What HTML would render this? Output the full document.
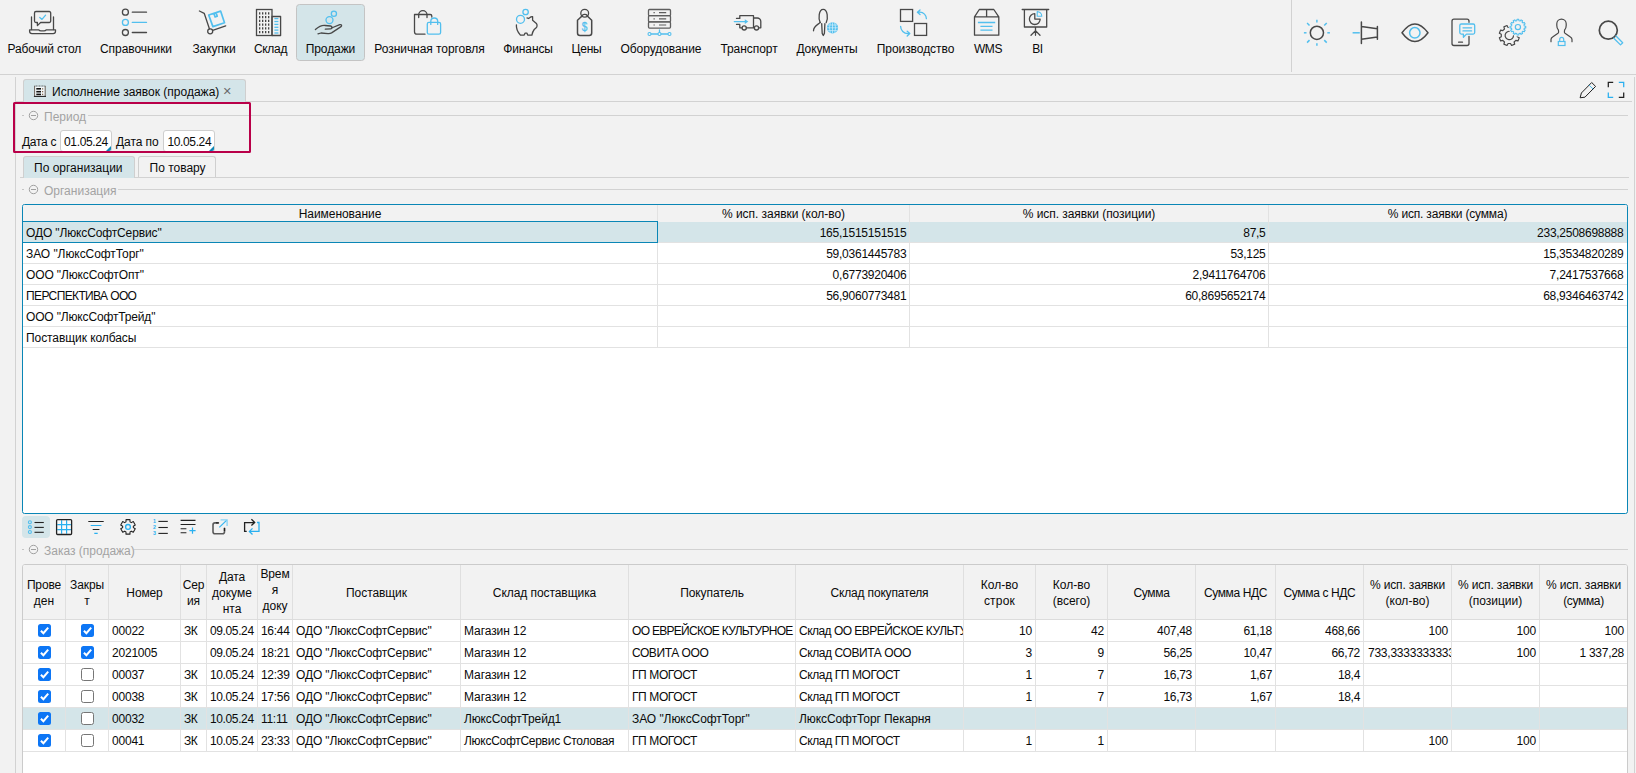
<!DOCTYPE html>
<html lang="ru"><head><meta charset="utf-8"><title>Исполнение заявок (продажа)</title>
<style>
*{box-sizing:border-box}
html,body{margin:0;padding:0}
body{width:1636px;height:773px;overflow:hidden;background:#f2f2f2;position:relative;
 font-family:"Liberation Sans",sans-serif;font-size:12px;line-height:16px;color:#0a0a0a}
.a{position:absolute}
.hl{position:absolute;height:1px;background:#d2d2d2}
.vl{position:absolute;width:1px;background:#d2d2d2}
.t{position:absolute;white-space:nowrap;line-height:16px}
.nl{position:absolute;top:41px;width:140px;margin-left:-70px;text-align:center;white-space:nowrap}
.g{color:#a3a3a3}
.num{letter-spacing:-0.28px}
svg{position:absolute;left:0;top:0;overflow:visible}
.d{fill:none;stroke:#484848;stroke-width:1.3;stroke-linecap:round;stroke-linejoin:round}
.b{fill:none;stroke:#52bfee;stroke-width:1.3;stroke-linecap:round;stroke-linejoin:round}
.sel{position:absolute;background:#d4e5e9;border:1px solid #c4c4c4;border-radius:3.5px}
.tab{position:absolute;border:1px solid #cfcfcf;border-bottom:none;border-radius:3px 3px 0 0}
.inp{position:absolute;background:#fff;border:1px solid #cecece;border-radius:3px;overflow:hidden}
.inp i{position:absolute;right:0;bottom:0;width:0;height:0;border-left:5px solid transparent;border-bottom:5px solid #0a86b6}
.tb1{position:absolute;left:22px;top:204px;width:1606px;height:310px;border:1px solid #0a86b6;border-radius:2.5px;background:#fff;overflow:hidden}
.tb2{position:absolute;left:22px;top:564px;width:1606px;height:230px;border:1px solid #cbcbcb;border-radius:3px;background:#fff;overflow:hidden}
.c{position:absolute;overflow:hidden;white-space:nowrap;line-height:16px}
.r{text-align:right}
.ctr{text-align:center}
.cb{position:absolute;width:13px;height:13px;border-radius:2.5px}
.cb.on{background:#0d76f5}
.cb.off{background:#fff;border:1px solid #767676}
</style></head>
<body>
<div class="sel" style="left:296px;top:4px;width:69px;height:57px"></div>
<div class="nl" style="left:44.4px"><span style="letter-spacing:-0.136px">Рабочий стол</span></div>
<div class="nl" style="left:136px"><span style="letter-spacing:-0.059px">Справочники</span></div>
<div class="nl" style="left:214px"><span style="letter-spacing:-0.078px">Закупки</span></div>
<div class="nl" style="left:270.5px"><span style="letter-spacing:-0.307px">Склад</span></div>
<div class="nl" style="left:330.5px"><span style="letter-spacing:-0.092px">Продажи</span></div>
<div class="nl" style="left:429.5px"><span style="letter-spacing:-0.052px">Розничная торговля</span></div>
<div class="nl" style="left:528px"><span style="letter-spacing:-0.098px">Финансы</span></div>
<div class="nl" style="left:586.5px"><span style="letter-spacing:-0.167px">Цены</span></div>
<div class="nl" style="left:661px"><span style="letter-spacing:-0.058px">Оборудование</span></div>
<div class="nl" style="left:749px"><span style="letter-spacing:-0.061px">Транспорт</span></div>
<div class="nl" style="left:827px"><span style="letter-spacing:-0.068px">Документы</span></div>
<div class="nl" style="left:915.5px"><span style="letter-spacing:-0.054px">Производство</span></div>
<div class="nl" style="left:988px"><span style="letter-spacing:-0.376px">WMS</span></div>
<div class="nl" style="left:1037.5px"><span style="letter-spacing:-0.426px">BI</span></div>
<div class="hl" style="left:0;top:74px;width:1636px"></div>
<div class="vl" style="left:1291px;top:0;height:72px"></div>
<svg width="1636" height="74" viewBox="0 0 1636 74">
<path class="d" d="M31.5 17V29.5M53.5 17V29.5"/><path class="d" d="M29.6 29.8H38.6q1 1.1 2.4 1.1h3q1.4 0 2.4-1.1H55.5V31.2q0 2.4-2.4 2.4H32q-2.4 0-2.4-2.4Z"/><path class="d" d="M36 11.5H49.2a1.5 1.5 0 0 1 1.5 1.5V21a1.5 1.5 0 0 1-1.5 1.5H40.6L37.4 25.6V22.5H36a1.5 1.5 0 0 1-1.5-1.5V13a1.5 1.5 0 0 1 1.5-1.5Z"/><path class="b" d="M39.8 17.4L42 19.4L45.6 15.2"/>
<circle class="d" cx="125.4" cy="12.2" r="3"/><path class="d" d="M132.3 12.2H146.5"/><circle class="b" cx="125.4" cy="22.4" r="3"/><path class="b" d="M132.3 22.4H146.5"/><circle class="d" cx="125.4" cy="32.5" r="3"/><path class="d" d="M132.3 32.5H146.5"/>
<path class="d" d="M199.4 11L204.2 13.3L209.4 28.8M212.7 30.4L225.7 25.8"/><circle class="d" cx="210.2" cy="31.3" r="2.5"/><path style="stroke-width:1.7" class="b" d="M208.7 15L220.6 11.1L224.5 22.7L212.9 26.6ZM213.9 13.3l1.2 3.7l2.1-.7l-1.2-3.7"/>
<rect style="stroke-linejoin:miter" class="d" x="256.5" y="9.5" width="15.5" height="26"/><rect class="d" x="272" y="16.5" width="8.6" height="19"/><path d="M259.7 12.3V34" stroke="#333" stroke-width="1.2" stroke-dasharray="2.1 1.65" fill="none"/><path d="M262.7 12.3V34" stroke="#333" stroke-width="1.2" stroke-dasharray="2.1 1.65" fill="none"/><path d="M265.7 12.3V34" stroke="#333" stroke-width="1.2" stroke-dasharray="2.1 1.65" fill="none"/><path d="M268.7 12.3V34" stroke="#333" stroke-width="1.2" stroke-dasharray="2.1 1.65" fill="none"/><path style="stroke-linecap:butt" class="b" d="M274.4 18.6H278.4"/><path style="stroke-linecap:butt" class="b" d="M274.4 21.5H278.4"/><path style="stroke-linecap:butt" class="b" d="M274.4 24.4H278.4"/><path style="stroke-linecap:butt" class="b" d="M274.4 27.3H278.4"/><path style="stroke-linecap:butt" class="b" d="M274.4 30.1H278.4"/><path style="stroke-linecap:butt" class="b" d="M274.4 33H278.4"/>
<circle class="b" cx="329.5" cy="20.1" r="3.5"/><circle class="b" cx="333.9" cy="13.7" r="2.6"/><path class="d" d="M315.4 29.6C318.5 26.8 321.5 25.2 325 25.5L330.6 26C332.6 26.3 332.4 28.7 330.6 28.8L325.3 29.1"/><path class="d" d="M331.5 28L339.8 24.7C341.5 24.2 342.2 25.8 341 26.6L331.6 32.9C330.4 33.6 329.4 33.7 328 33.6L321 33L318 33.9"/>
<path class="d" d="M425 34.2H417a2.5 2.5 0 0 1-2.5-2.5V14.5H430.2a1.6 1.6 0 0 1 1.6 1.6V17"/><path class="d" d="M418.7 17.5V15a4.15 4.3 0 0 1 8.3 0V17.5"/><rect class="b" x="427.3" y="22.3" width="13.3" height="11.9" rx="1.6"/><path class="b" d="M430.8 24.4V21.5a3.45 3.5 0 0 1 6.9 0V24.4"/>
<circle class="b" cx="520.5" cy="19.3" r="4"/><circle class="b" cx="525.6" cy="12" r="2.7"/><path class="d" d="M516.4 24.8C516 29 518 32.4 520.4 35.1H524.2L525 33.2H527L527.7 35.1H531.9C532.4 32.6 533.2 30.8 534.2 29.5L536.2 27.8C537.2 27 537.4 24.6 536.4 23.5L532.6 20.2V16.7C531.5 16.6 530.6 16.9 530 17.5L528.6 18.5L527 17.9"/>
<path style="stroke-width:1.5" class="d" d="M582.3 15.7L577.5 20.3V33a2.5 2.5 0 0 0 2.5 2.5H589.2a2.5 2.5 0 0 0 2.5-2.5V20.3L587 15.7"/><circle class="d" cx="584.7" cy="13.3" r="3.9"/><path class="d" d="M581.5 16.5C582.5 14.3 585.5 13.6 587.6 15.6"/><text transform="translate(584.6 30.5) scale(.88 1.04)" text-anchor="middle" font-family="Liberation Sans,sans-serif" font-size="11.5" fill="#52bfee" stroke="#52bfee" stroke-width=".3">$</text>
<rect x="648.5" y="9.5" width="22" height="6.2" rx="1" fill="none" stroke="#5e5e5e" stroke-width="1.3"/><path d="M653.5 12.6H654.8M659 12.6H666.2" stroke="#5e5e5e" stroke-width="1.2" fill="none"/><rect x="648.5" y="15.7" width="22" height="6.2" rx="1" fill="none" stroke="#5e5e5e" stroke-width="1.3"/><path d="M653.5 18.8H654.8M659 18.8H666.2" stroke="#5e5e5e" stroke-width="1.2" fill="none"/><rect x="648.5" y="21.9" width="22" height="6.2" rx="1" fill="none" stroke="#5e5e5e" stroke-width="1.3"/><path d="M653.5 25H654.8M659 25H666.2" stroke="#5e5e5e" stroke-width="1.2" fill="none"/><path class="b" d="M649.5 34H669.5M659.5 30V32.5"/><circle cx="649.5" cy="34" r="1.5" fill="#f2f2f2" stroke="#52bfee" stroke-width="1.1"/><circle cx="659.5" cy="34" r="1.5" fill="#f2f2f2" stroke="#52bfee" stroke-width="1.1"/><circle cx="669.5" cy="34" r="1.5" fill="#f2f2f2" stroke="#52bfee" stroke-width="1.1"/>
<path class="d" d="M739.8 18.4V15.7H753.5V27.8M736.5 18.4H739.8M736.5 24.4H739.8V27.8H742M746.4 27.8H754.3M758.7 27.8H760.8V21.6a3.6 3.6 0 0 0-3.6-3.6H753.5"/><circle class="d" cx="744.2" cy="27.9" r="2.1"/><circle class="d" cx="756.5" cy="27.9" r="2.1"/><path class="b" d="M734.3 21.6H745.5"/><path d="M744.8 19.3L748.3 21.6L744.8 23.9Z" fill="#52bfee"/>
<path class="d" d="M820.2 22.6C818.2 19 818.6 9.3 823.2 9.3C827.8 9.3 828.2 19 826.2 22.6"/><path class="d" d="M820.2 22.4C818.6 24.4 813.5 25.6 813.5 30.8"/><path class="d" d="M821.7 23.6L822.2 33.4L823.3 35.5L824.4 33.4L824.9 23.6"/><circle cx="832.5" cy="27.8" r="5.6" fill="#52bfee"/><path d="M827 27.8H838M832.5 22.3V33.3M827.8 25H837.2M827.8 30.6H837.2M830.3 22.8Q828.6 27.8 830.3 32.8M834.7 22.8Q836.4 27.8 834.7 32.8" stroke="#d9f0fb" stroke-width=".7" fill="none"/>
<rect style="stroke-linejoin:miter" class="d" x="900.5" y="9.5" width="12.1" height="11.9"/><rect style="stroke-linejoin:miter" class="d" x="914.5" y="23.5" width="12.1" height="11.9"/><path class="b" d="M926.4 18.7A6.5 6.5 0 0 0 919.9 12.2H917.8M920 9.9L917.4 12.2L920 14.6"/><path class="b" d="M900.6 26.3A7.3 7.3 0 0 0 907.9 33.6H909.4M907.2 31.3L909.8 33.6L907.2 36"/>
<path class="d" d="M974.5 16.8L979.3 9.5H993.8L998.8 16.8V35.2H974.5ZM974.5 16.8H998.8M986.6 9.5V16.8"/><path style="stroke-linecap:butt" class="b" d="M977.9 22.5H995.2M980.4 26.4H992.5M980.4 30.2H992.5"/>
<path class="d" d="M1022.2 9.5H1048.7M1024.4 9.5V27H1046.7V9.5M1035.5 27V35.3M1035.5 30.6L1031 35.3M1035.5 30.6L1040 35.3"/><path class="d" d="M1034.8 13.7A5.4 5.4 0 1 0 1040.2 19.1H1034.8Z"/><path style="stroke-width:1.1" class="b" d="M1037.2 11.6A4.6 4.6 0 0 1 1041.8 16.2H1037.2Z"/>
<circle style="stroke-width:1.5" class="d" cx="1316.9" cy="32.8" r="6.6"/><path style="stroke-width:1.5;stroke-linecap:butt" class="b" d="M1327.30 32.80L1329.90 32.80"/><path style="stroke-width:1.5;stroke-linecap:butt" class="b" d="M1324.25 40.15L1326.73 42.63"/><path style="stroke-width:1.5;stroke-linecap:butt" class="b" d="M1316.90 43.20L1316.90 45.80"/><path style="stroke-width:1.5;stroke-linecap:butt" class="b" d="M1309.55 40.15L1307.07 42.63"/><path style="stroke-width:1.5;stroke-linecap:butt" class="b" d="M1306.50 32.80L1303.90 32.80"/><path style="stroke-width:1.5;stroke-linecap:butt" class="b" d="M1309.55 25.45L1307.07 22.97"/><path style="stroke-width:1.5;stroke-linecap:butt" class="b" d="M1316.90 22.40L1316.90 19.80"/><path style="stroke-width:1.5;stroke-linecap:butt" class="b" d="M1324.25 25.45L1326.73 22.97"/>
<path style="stroke-width:1.5;stroke-linecap:butt" class="b" d="M1352.6 32.8H1359.8"/><path style="stroke-width:1.5" class="d" d="M1361.4 22V43.5M1361.4 26.4L1377.4 28.7M1361.4 39.2L1377.4 36.9M1377.4 26.4V39.2"/>
<path style="stroke-width:1.5" class="d" d="M1402 32.8Q1414.8 15.2 1428 32.8Q1414.8 50.4 1402 32.8Z"/><circle style="stroke-width:1.5" class="b" cx="1414.8" cy="32.8" r="5.2"/>
<path style="stroke-width:1.3" class="d" d="M1469 22.3V21.2a2 2 0 0 0-2-2H1454a2 2 0 0 0-2 2V43.5a2 2 0 0 0 2 2H1467a2 2 0 0 0 2-2V36.5M1458.6 42.2H1462.5"/><path class="b" d="M1461.3 24H1473.2a1.5 1.5 0 0 1 1.5 1.5V32.6a1.5 1.5 0 0 1-1.5 1.5H1466.5L1463.4 37.2V34.1H1461.3a1.5 1.5 0 0 1-1.5-1.5V25.5a1.5 1.5 0 0 1 1.5-1.5ZM1463 27.8H1471.6M1463 30.9H1471.6"/>
<path style="stroke-width:1.2" class="d" d="M1517.31 36.70 L1519.24 37.80 L1517.95 40.90 L1515.82 40.31 L1514.11 42.02 L1514.70 44.15 L1511.60 45.44 L1510.50 43.51 L1508.10 43.51 L1507.00 45.44 L1503.90 44.15 L1504.49 42.02 L1502.78 40.31 L1500.65 40.90 L1499.36 37.80 L1501.29 36.70 L1501.29 34.30 L1499.36 33.20 L1500.65 30.10 L1502.78 30.69 L1504.49 28.98 L1503.90 26.85 L1507.00 25.56 L1508.10 27.49 L1510.50 27.49 L1511.60 25.56 L1514.70 26.85 L1514.11 28.98 L1515.82 30.69 L1517.95 30.10 L1519.24 33.20 L1517.31 34.30 Z"/><path style="stroke-width:1.2" class="d" d="M1510.4 31.4A4.2 4.2 0 1 0 1513.5 35.7"/><circle cx="1517.9" cy="27.1" r="9.3" fill="#f2f2f2"/><path style="stroke-width:1.1" class="b" d="M1524.31 26.05 L1525.75 26.23 L1525.75 27.97 L1524.31 28.15 L1523.98 29.40 L1525.13 30.28 L1524.27 31.78 L1522.93 31.22 L1522.02 32.13 L1522.58 33.47 L1521.08 34.33 L1520.20 33.18 L1518.95 33.51 L1518.77 34.95 L1517.03 34.95 L1516.85 33.51 L1515.60 33.18 L1514.72 34.33 L1513.22 33.47 L1513.78 32.13 L1512.87 31.22 L1511.53 31.78 L1510.67 30.28 L1511.82 29.40 L1511.49 28.15 L1510.05 27.97 L1510.05 26.23 L1511.49 26.05 L1511.82 24.80 L1510.67 23.92 L1511.53 22.42 L1512.87 22.98 L1513.78 22.07 L1513.22 20.73 L1514.72 19.87 L1515.60 21.02 L1516.85 20.69 L1517.03 19.25 L1518.77 19.25 L1518.95 20.69 L1520.20 21.02 L1521.08 19.87 L1522.58 20.73 L1522.02 22.07 L1522.93 22.98 L1524.27 22.42 L1525.13 23.92 L1523.98 24.80 Z"/><circle style="stroke-width:1.2" class="b" cx="1517.9" cy="27.1" r="2.6"/>
<path style="stroke-width:1.2" class="d" d="M1551 41.7V39.5C1551 38.3 1551.6 37.6 1552.6 37L1558 33.3C1558.6 32.9 1558.7 32.3 1558.6 31.6L1558.4 30C1557.2 28.9 1556.8 27.5 1556.8 25.5V23.7A4.7 4.7 0 0 1 1566.2 23.7V25.5C1566.2 27.5 1565.8 28.9 1564.6 30L1564.4 31.6C1564.3 32.3 1564.4 32.9 1565 33.3L1570.4 37C1571.4 37.6 1572 38.3 1572 39.5V41.7"/><rect style="stroke-width:1.2;stroke-linejoin:miter" class="b" x="1558.3" y="41.5" width="6.7" height="4"/><path style="stroke-width:1.2" class="b" d="M1559.7 41.5V39.4a2 2 0 0 1 4 0V41.5"/>
<circle style="stroke-width:1.7" class="d" cx="1608.3" cy="30.2" r="9"/><path style="stroke-width:1.3" class="b" d="M1616 36L1622.7 42.7L1620.5 44.9L1613.8 38.2"/>
</svg>
<div class="vl" style="left:15px;top:77px;height:700px"></div><div class="vl" style="left:1634px;top:77px;height:700px"></div>
<div class="hl" style="left:16px;top:101px;width:1616px"></div><div class="tab" style="left:23px;top:79px;width:223px;height:23px;background:#d4e5e9"></div><div class="t" style="left:52px;top:84px">Исполнение заявок (продажа)</div><div class="t" style="left:223px;top:83px;font-size:14.5px;color:#6a6a6a;line-height:16px">×</div>
<div class="hl" style="left:22px;top:115px;width:2px;background:#c4c4c4"></div><div class="hl" style="left:88px;top:115px;width:1540px"></div><div class="t g" style="left:44px;top:109px">Период</div>
<div class="t" style="left:22px;top:134px"><span style="letter-spacing:-0.284px">Дата с</span></div><div class="inp" style="left:60px;top:130px;width:52px;height:22px"><i></i></div><div class="t" style="left:64px;top:134px"><span style="letter-spacing:-0.352px">01.05.24</span></div><div class="t" style="left:116px;top:134px"><span style="letter-spacing:-0.068px">Дата по</span></div><div class="inp" style="left:163px;top:130px;width:52px;height:22px"><i></i></div><div class="t" style="left:167.5px;top:134px"><span style="letter-spacing:-0.377px">10.05.24</span></div>
<div class="a" style="left:13px;top:102px;width:238px;height:51px;border:2px solid #b90049;border-radius:1.5px"></div>
<div class="hl" style="left:20px;top:177px;width:1609px"></div><div class="tab" style="left:23px;top:156px;width:112px;height:22px;background:#d4e5e9"></div><div class="t" style="left:34px;top:160px">По организации</div><div class="tab" style="left:138px;top:156px;width:78px;height:21px;background:#f2f2f2"></div><div class="t" style="left:149.5px;top:160px">По товару</div>
<div class="hl" style="left:22px;top:189px;width:2px;background:#c4c4c4"></div><div class="hl" style="left:118px;top:189px;width:1510px"></div><div class="t g" style="left:44px;top:183px">Организация</div>
<div class="tb1"><div class="a" style="left:0;top:0;width:1604px;height:17px;background:#f2f2f2"></div><div class="a" style="left:0;top:17px;width:1604px;height:20px;background:#d4e5e9"></div><div class="hl" style="left:0;top:37px;width:1604px;background:#e2e2e2"></div><div class="hl" style="left:0;top:58px;width:1604px;background:#e2e2e2"></div><div class="hl" style="left:0;top:79px;width:1604px;background:#e2e2e2"></div><div class="hl" style="left:0;top:100px;width:1604px;background:#e2e2e2"></div><div class="hl" style="left:0;top:121px;width:1604px;background:#e2e2e2"></div><div class="hl" style="left:0;top:142px;width:1604px;background:#e2e2e2"></div><div class="vl" style="left:634px;top:0;height:143px;background:#e2e2e2"></div><div class="vl" style="left:886px;top:0;height:143px;background:#e2e2e2"></div><div class="vl" style="left:1245px;top:0;height:143px;background:#e2e2e2"></div><div class="c ctr" style="left:0px;top:1px;width:634px"><span style="letter-spacing:-0.054px">Наименование</span></div><div class="c ctr" style="left:635px;top:1px;width:251px"><span style="letter-spacing:-0.042px">% исп. заявки (кол-во)</span></div><div class="c ctr" style="left:887px;top:1px;width:358px"><span style="letter-spacing:-0.054px">% исп. заявки (позиции)</span></div><div class="c ctr" style="left:1246px;top:1px;width:357px"><span style="letter-spacing:-0.179px">% исп. заявки (сумма)</span></div><div class="c" style="left:3px;top:20px;width:628px"><span style="letter-spacing:-0.134px">ОДО "ЛюксСофтСервис"</span></div><div class="c r" style="left:635px;top:20px;width:251px;padding-right:2.6px"><span style="letter-spacing:-0.24px">165,1515151515</span></div><div class="c r" style="left:887px;top:20px;width:358px;padding-right:2.6px"><span style="letter-spacing:-0.323px">87,5</span></div><div class="c r" style="left:1246px;top:20px;width:357px;padding-right:2.6px"><span style="letter-spacing:-0.271px">233,2508698888</span></div>
<div class="c" style="left:3px;top:41px;width:628px"><span style="letter-spacing:-0.067px">ЗАО "ЛюксСофтТорг"</span></div><div class="c r" style="left:635px;top:41px;width:251px;padding-right:2.6px"><span style="letter-spacing:-0.243px">59,0361445783</span></div><div class="c r" style="left:887px;top:41px;width:358px;padding-right:2.6px"><span style="letter-spacing:-0.284px">53,125</span></div><div class="c r" style="left:1246px;top:41px;width:357px;padding-right:2.6px"><span style="letter-spacing:-0.243px">15,3534820289</span></div>
<div class="c" style="left:3px;top:62px;width:628px"><span style="letter-spacing:-0.123px">ООО "ЛюксСофтОпт"</span></div><div class="c r" style="left:635px;top:62px;width:251px;padding-right:2.6px"><span style="letter-spacing:-0.246px">0,6773920406</span></div><div class="c r" style="left:887px;top:62px;width:358px;padding-right:2.6px"><span style="letter-spacing:-0.246px">2,9411764706</span></div><div class="c r" style="left:1246px;top:62px;width:357px;padding-right:2.6px"><span style="letter-spacing:-0.246px">7,2417537668</span></div>
<div class="c" style="left:3px;top:83px;width:628px"><span style="letter-spacing:-0.626px">ПЕРСПЕКТИВА ООО</span></div><div class="c r" style="left:635px;top:83px;width:251px;padding-right:2.6px"><span style="letter-spacing:-0.243px">56,9060773481</span></div><div class="c r" style="left:887px;top:83px;width:358px;padding-right:2.6px"><span style="letter-spacing:-0.243px">60,8695652174</span></div><div class="c r" style="left:1246px;top:83px;width:357px;padding-right:2.6px"><span style="letter-spacing:-0.243px">68,9346463742</span></div>
<div class="c" style="left:3px;top:104px;width:628px"><span style="letter-spacing:-0.157px">ООО "ЛюксСофтТрейд"</span></div>
<div class="c" style="left:3px;top:125px;width:628px"><span style="letter-spacing:-0.074px">Поставщик колбасы</span></div>
<div class="a" style="left:-1px;top:16px;width:636px;height:22px;border:1px solid #0a86b6"></div></div>
<div class="a" style="left:22px;top:516px;width:28px;height:22px;background:#d4e5e9;border-radius:4px"></div>
<div class="hl" style="left:22px;top:549px;width:2px;background:#c4c4c4"></div><div class="hl" style="left:134px;top:549px;width:1494px"></div><div class="t g" style="left:44px;top:543px">Заказ (продажа)</div>
<div class="tb2"><div class="a" style="left:0;top:0;width:1604px;height:54px;background:#f2f2f2"></div><div class="a" style="left:0;top:143px;width:1604px;height:21px;background:#d4e5e9"></div><div class="hl" style="left:0;top:54px;width:1604px;background:#dcdcdc"></div><div class="hl" style="left:0;top:76px;width:1604px;background:#e2e2e2"></div><div class="hl" style="left:0;top:98px;width:1604px;background:#e2e2e2"></div><div class="hl" style="left:0;top:120px;width:1604px;background:#e2e2e2"></div><div class="hl" style="left:0;top:142px;width:1604px;background:#e2e2e2"></div><div class="hl" style="left:0;top:164px;width:1604px;background:#e2e2e2"></div><div class="hl" style="left:0;top:186px;width:1604px;background:#e2e2e2"></div><div class="vl" style="left:42px;top:0;height:54px;background:#dfdfdf"></div><div class="vl" style="left:42px;top:55px;height:131px;background:#e2e2e2"></div><div class="vl" style="left:85px;top:0;height:54px;background:#dfdfdf"></div><div class="vl" style="left:85px;top:55px;height:131px;background:#e2e2e2"></div><div class="vl" style="left:157px;top:0;height:54px;background:#dfdfdf"></div><div class="vl" style="left:157px;top:55px;height:131px;background:#e2e2e2"></div><div class="vl" style="left:183px;top:0;height:54px;background:#dfdfdf"></div><div class="vl" style="left:183px;top:55px;height:131px;background:#e2e2e2"></div><div class="vl" style="left:234px;top:0;height:54px;background:#dfdfdf"></div><div class="vl" style="left:234px;top:55px;height:131px;background:#e2e2e2"></div><div class="vl" style="left:269px;top:0;height:54px;background:#dfdfdf"></div><div class="vl" style="left:269px;top:55px;height:131px;background:#e2e2e2"></div><div class="vl" style="left:437px;top:0;height:54px;background:#dfdfdf"></div><div class="vl" style="left:437px;top:55px;height:131px;background:#e2e2e2"></div><div class="vl" style="left:605px;top:0;height:54px;background:#dfdfdf"></div><div class="vl" style="left:605px;top:55px;height:131px;background:#e2e2e2"></div><div class="vl" style="left:772px;top:0;height:54px;background:#dfdfdf"></div><div class="vl" style="left:772px;top:55px;height:131px;background:#e2e2e2"></div><div class="vl" style="left:940px;top:0;height:54px;background:#dfdfdf"></div><div class="vl" style="left:940px;top:55px;height:131px;background:#e2e2e2"></div><div class="vl" style="left:1012px;top:0;height:54px;background:#dfdfdf"></div><div class="vl" style="left:1012px;top:55px;height:131px;background:#e2e2e2"></div><div class="vl" style="left:1084px;top:0;height:54px;background:#dfdfdf"></div><div class="vl" style="left:1084px;top:55px;height:131px;background:#e2e2e2"></div><div class="vl" style="left:1172px;top:0;height:54px;background:#dfdfdf"></div><div class="vl" style="left:1172px;top:55px;height:131px;background:#e2e2e2"></div><div class="vl" style="left:1252px;top:0;height:54px;background:#dfdfdf"></div><div class="vl" style="left:1252px;top:55px;height:131px;background:#e2e2e2"></div><div class="vl" style="left:1340px;top:0;height:54px;background:#dfdfdf"></div><div class="vl" style="left:1340px;top:55px;height:131px;background:#e2e2e2"></div><div class="vl" style="left:1428px;top:0;height:54px;background:#dfdfdf"></div><div class="vl" style="left:1428px;top:55px;height:131px;background:#e2e2e2"></div><div class="vl" style="left:1516px;top:0;height:54px;background:#dfdfdf"></div><div class="vl" style="left:1516px;top:55px;height:131px;background:#e2e2e2"></div>
<div class="c ctr" style="left:0px;top:12px;width:42px"><span style="letter-spacing:-0.129px">Прове</span><br>ден</div><div class="c ctr" style="left:43px;top:12px;width:42px"><span style="letter-spacing:-0.109px">Закры</span><br>т</div><div class="c ctr" style="left:86px;top:20px;width:71px"><span style="letter-spacing:-0.128px">Номер</span></div><div class="c ctr" style="left:158px;top:12px;width:25px"><span style="letter-spacing:-0.217px">Сер</span><br>ия</div><div class="c ctr" style="left:184px;top:4px;width:50px"><span style="letter-spacing:-0.153px">Дата</span><br>докуме<br>нта</div><div class="c ctr" style="left:235px;top:0;width:34px;height:51px"><div style="margin-top:1px"><span style="letter-spacing:-0.15px">Врем</span><br>я<br>доку<br>мента</div></div><div class="c ctr" style="left:270px;top:20px;width:167px"><span style="letter-spacing:-0.072px">Поставщик</span></div><div class="c ctr" style="left:438px;top:20px;width:167px"><span style="letter-spacing:-0.062px">Склад поставщика</span></div><div class="c ctr" style="left:606px;top:20px;width:166px"><span style="letter-spacing:-0.078px">Покупатель</span></div><div class="c ctr" style="left:773px;top:20px;width:167px"><span style="letter-spacing:-0.173px">Склад покупателя</span></div><div class="c ctr" style="left:941px;top:12px;width:71px"><span style="letter-spacing:0.065px">Кол-во</span><br><span style="letter-spacing:0.221px">строк</span></div><div class="c ctr" style="left:1013px;top:12px;width:71px"><span style="letter-spacing:0.065px">Кол-во</span><br>(всего)</div><div class="c ctr" style="left:1085px;top:20px;width:87px"><span style="letter-spacing:-0.344px">Сумма</span></div><div class="c ctr" style="left:1173px;top:20px;width:79px"><span style="letter-spacing:-0.389px">Сумма НДС</span></div><div class="c ctr" style="left:1253px;top:20px;width:87px"><span style="letter-spacing:-0.359px">Сумма с НДС</span></div><div class="c ctr" style="left:1341px;top:12px;width:87px"><span style="letter-spacing:-0.144px">% исп. заявки</span><br><span style="letter-spacing:0.062px">(кол-во)</span></div><div class="c ctr" style="left:1429px;top:12px;width:87px"><span style="letter-spacing:-0.144px">% исп. заявки</span><br>(позиции)</div><div class="c ctr" style="left:1517px;top:12px;width:87px"><span style="letter-spacing:-0.144px">% исп. заявки</span><br><span style="letter-spacing:-0.333px">(сумма)</span></div>
<div class="cb on" style="left:15px;top:59px"><svg width="13" height="13" viewBox="0 0 13 13" style="position:absolute;left:0;top:0"><path d="M2.9 6.7L5.4 9.2L10.2 3.6" fill="none" stroke="#fff" stroke-width="2"/></svg></div><div class="cb on" style="left:58px;top:59px"><svg width="13" height="13" viewBox="0 0 13 13" style="position:absolute;left:0;top:0"><path d="M2.9 6.7L5.4 9.2L10.2 3.6" fill="none" stroke="#fff" stroke-width="2"/></svg></div><div class="c" style="left:86px;top:58px;width:71px;padding-left:3px"><span style="letter-spacing:-0.207px">00022</span></div><div class="c" style="left:158px;top:58px;width:25px;padding-left:3px"><span style="letter-spacing:-0.534px">ЗК</span></div><div class="c" style="left:184px;top:58px;width:50px;padding-left:3px"><span style="letter-spacing:-0.377px">09.05.24</span></div><div class="c" style="left:235px;top:58px;width:34px;padding-left:3px"><span style="letter-spacing:-0.3px">16:44</span></div><div class="c" style="left:270px;top:58px;width:167px;padding-left:3px"><span style="letter-spacing:-0.134px">ОДО "ЛюксСофтСервис"</span></div><div class="c" style="left:438px;top:58px;width:167px;padding-left:3px"><span style="letter-spacing:-0.068px">Магазин 12</span></div><div class="c" style="left:606px;top:58px;width:166px;padding-left:3px"><span style="letter-spacing:-0.7px">ОО ЕВРЕЙСКОЕ КУЛЬТУРНОЕ ОБЩЕСТВО</span></div><div class="c" style="left:773px;top:58px;width:167px;padding-left:3px"><span style="letter-spacing:-0.529px">Склад ОО ЕВРЕЙСКОЕ КУЛЬТУРНОЕ ОБЩЕСТВО</span></div><div class="c r" style="left:941px;top:58px;width:71px;padding:0 3px 0 4px"><span style="letter-spacing:-0.207px">10</span></div><div class="c r" style="left:1013px;top:58px;width:71px;padding:0 3px 0 4px"><span style="letter-spacing:-0.207px">42</span></div><div class="c r" style="left:1085px;top:58px;width:87px;padding:0 3px 0 4px"><span style="letter-spacing:-0.284px">407,48</span></div><div class="c r" style="left:1173px;top:58px;width:79px;padding:0 3px 0 4px"><span style="letter-spacing:-0.3px">61,18</span></div><div class="c r" style="left:1253px;top:58px;width:87px;padding:0 3px 0 4px"><span style="letter-spacing:-0.284px">468,66</span></div><div class="c r" style="left:1341px;top:58px;width:87px;padding:0 3px 0 4px"><span style="letter-spacing:-0.207px">100</span></div><div class="c r" style="left:1429px;top:58px;width:87px;padding:0 3px 0 4px"><span style="letter-spacing:-0.207px">100</span></div><div class="c r" style="left:1517px;top:58px;width:87px;padding:0 3px 0 4px"><span style="letter-spacing:-0.207px">100</span></div>
<div class="cb on" style="left:15px;top:81px"><svg width="13" height="13" viewBox="0 0 13 13" style="position:absolute;left:0;top:0"><path d="M2.9 6.7L5.4 9.2L10.2 3.6" fill="none" stroke="#fff" stroke-width="2"/></svg></div><div class="cb on" style="left:58px;top:81px"><svg width="13" height="13" viewBox="0 0 13 13" style="position:absolute;left:0;top:0"><path d="M2.9 6.7L5.4 9.2L10.2 3.6" fill="none" stroke="#fff" stroke-width="2"/></svg></div><div class="c" style="left:86px;top:80px;width:71px;padding-left:3px"><span style="letter-spacing:-0.207px">2021005</span></div><div class="c" style="left:184px;top:80px;width:50px;padding-left:3px"><span style="letter-spacing:-0.377px">09.05.24</span></div><div class="c" style="left:235px;top:80px;width:34px;padding-left:3px"><span style="letter-spacing:-0.3px">18:21</span></div><div class="c" style="left:270px;top:80px;width:167px;padding-left:3px"><span style="letter-spacing:-0.134px">ОДО "ЛюксСофтСервис"</span></div><div class="c" style="left:438px;top:80px;width:167px;padding-left:3px"><span style="letter-spacing:-0.068px">Магазин 12</span></div><div class="c" style="left:606px;top:80px;width:166px;padding-left:3px"><span style="letter-spacing:-0.434px">СОВИТА ООО</span></div><div class="c" style="left:773px;top:80px;width:167px;padding-left:3px"><span style="letter-spacing:-0.419px">Склад СОВИТА ООО</span></div><div class="c r" style="left:941px;top:80px;width:71px;padding:0 3px 0 4px"><span style="letter-spacing:-0.207px">3</span></div><div class="c r" style="left:1013px;top:80px;width:71px;padding:0 3px 0 4px"><span style="letter-spacing:-0.207px">9</span></div><div class="c r" style="left:1085px;top:80px;width:87px;padding:0 3px 0 4px"><span style="letter-spacing:-0.3px">56,25</span></div><div class="c r" style="left:1173px;top:80px;width:79px;padding:0 3px 0 4px"><span style="letter-spacing:-0.3px">10,47</span></div><div class="c r" style="left:1253px;top:80px;width:87px;padding:0 3px 0 4px"><span style="letter-spacing:-0.3px">66,72</span></div><div class="c r" style="left:1341px;top:80px;width:87px;padding:0 3px 0 4px"><span style="letter-spacing:-0.24px">733,3333333333</span></div><div class="c r" style="left:1429px;top:80px;width:87px;padding:0 3px 0 4px"><span style="letter-spacing:-0.207px">100</span></div><div class="c r" style="left:1517px;top:80px;width:87px;padding:0 3px 0 4px"><span style="letter-spacing:-0.281px">1 337,28</span></div>
<div class="cb on" style="left:15px;top:103px"><svg width="13" height="13" viewBox="0 0 13 13" style="position:absolute;left:0;top:0"><path d="M2.9 6.7L5.4 9.2L10.2 3.6" fill="none" stroke="#fff" stroke-width="2"/></svg></div><div class="cb off" style="left:58px;top:103px"></div><div class="c" style="left:86px;top:102px;width:71px;padding-left:3px"><span style="letter-spacing:-0.207px">00037</span></div><div class="c" style="left:158px;top:102px;width:25px;padding-left:3px"><span style="letter-spacing:-0.534px">ЗК</span></div><div class="c" style="left:184px;top:102px;width:50px;padding-left:3px"><span style="letter-spacing:-0.377px">10.05.24</span></div><div class="c" style="left:235px;top:102px;width:34px;padding-left:3px"><span style="letter-spacing:-0.3px">12:39</span></div><div class="c" style="left:270px;top:102px;width:167px;padding-left:3px"><span style="letter-spacing:-0.134px">ОДО "ЛюксСофтСервис"</span></div><div class="c" style="left:438px;top:102px;width:167px;padding-left:3px"><span style="letter-spacing:-0.068px">Магазин 12</span></div><div class="c" style="left:606px;top:102px;width:166px;padding-left:3px"><span style="letter-spacing:-0.394px">ГП МОГОСТ</span></div><div class="c" style="left:773px;top:102px;width:167px;padding-left:3px"><span style="letter-spacing:-0.394px">Склад ГП МОГОСТ</span></div><div class="c r" style="left:941px;top:102px;width:71px;padding:0 3px 0 4px"><span style="letter-spacing:-0.207px">1</span></div><div class="c r" style="left:1013px;top:102px;width:71px;padding:0 3px 0 4px"><span style="letter-spacing:-0.207px">7</span></div><div class="c r" style="left:1085px;top:102px;width:87px;padding:0 3px 0 4px"><span style="letter-spacing:-0.3px">16,73</span></div><div class="c r" style="left:1173px;top:102px;width:79px;padding:0 3px 0 4px"><span style="letter-spacing:-0.323px">1,67</span></div><div class="c r" style="left:1253px;top:102px;width:87px;padding:0 3px 0 4px"><span style="letter-spacing:-0.323px">18,4</span></div>
<div class="cb on" style="left:15px;top:125px"><svg width="13" height="13" viewBox="0 0 13 13" style="position:absolute;left:0;top:0"><path d="M2.9 6.7L5.4 9.2L10.2 3.6" fill="none" stroke="#fff" stroke-width="2"/></svg></div><div class="cb off" style="left:58px;top:125px"></div><div class="c" style="left:86px;top:124px;width:71px;padding-left:3px"><span style="letter-spacing:-0.207px">00038</span></div><div class="c" style="left:158px;top:124px;width:25px;padding-left:3px"><span style="letter-spacing:-0.534px">ЗК</span></div><div class="c" style="left:184px;top:124px;width:50px;padding-left:3px"><span style="letter-spacing:-0.377px">10.05.24</span></div><div class="c" style="left:235px;top:124px;width:34px;padding-left:3px"><span style="letter-spacing:-0.3px">17:56</span></div><div class="c" style="left:270px;top:124px;width:167px;padding-left:3px"><span style="letter-spacing:-0.134px">ОДО "ЛюксСофтСервис"</span></div><div class="c" style="left:438px;top:124px;width:167px;padding-left:3px"><span style="letter-spacing:-0.068px">Магазин 12</span></div><div class="c" style="left:606px;top:124px;width:166px;padding-left:3px"><span style="letter-spacing:-0.394px">ГП МОГОСТ</span></div><div class="c" style="left:773px;top:124px;width:167px;padding-left:3px"><span style="letter-spacing:-0.394px">Склад ГП МОГОСТ</span></div><div class="c r" style="left:941px;top:124px;width:71px;padding:0 3px 0 4px"><span style="letter-spacing:-0.207px">1</span></div><div class="c r" style="left:1013px;top:124px;width:71px;padding:0 3px 0 4px"><span style="letter-spacing:-0.207px">7</span></div><div class="c r" style="left:1085px;top:124px;width:87px;padding:0 3px 0 4px"><span style="letter-spacing:-0.3px">16,73</span></div><div class="c r" style="left:1173px;top:124px;width:79px;padding:0 3px 0 4px"><span style="letter-spacing:-0.323px">1,67</span></div><div class="c r" style="left:1253px;top:124px;width:87px;padding:0 3px 0 4px"><span style="letter-spacing:-0.323px">18,4</span></div>
<div class="cb on" style="left:15px;top:147px"><svg width="13" height="13" viewBox="0 0 13 13" style="position:absolute;left:0;top:0"><path d="M2.9 6.7L5.4 9.2L10.2 3.6" fill="none" stroke="#fff" stroke-width="2"/></svg></div><div class="cb off" style="left:58px;top:147px"></div><div class="c" style="left:86px;top:146px;width:71px;padding-left:3px"><span style="letter-spacing:-0.207px">00032</span></div><div class="c" style="left:158px;top:146px;width:25px;padding-left:3px"><span style="letter-spacing:-0.534px">ЗК</span></div><div class="c" style="left:184px;top:146px;width:50px;padding-left:3px"><span style="letter-spacing:-0.377px">10.05.24</span></div><div class="c" style="left:235px;top:146px;width:34px;padding-left:3px"><span style="letter-spacing:-0.3px">11:11</span></div><div class="c" style="left:270px;top:146px;width:167px;padding-left:3px"><span style="letter-spacing:-0.134px">ОДО "ЛюксСофтСервис"</span></div><div class="c" style="left:438px;top:146px;width:167px;padding-left:3px"><span style="letter-spacing:-0.143px">ЛюксСофтТрейд1</span></div><div class="c" style="left:606px;top:146px;width:166px;padding-left:3px"><span style="letter-spacing:-0.067px">ЗАО "ЛюксСофтТорг"</span></div><div class="c" style="left:773px;top:146px;width:167px;padding-left:3px"><span style="letter-spacing:-0.083px">ЛюксСофтТорг Пекарня</span></div>
<div class="cb on" style="left:15px;top:169px"><svg width="13" height="13" viewBox="0 0 13 13" style="position:absolute;left:0;top:0"><path d="M2.9 6.7L5.4 9.2L10.2 3.6" fill="none" stroke="#fff" stroke-width="2"/></svg></div><div class="cb off" style="left:58px;top:169px"></div><div class="c" style="left:86px;top:168px;width:71px;padding-left:3px"><span style="letter-spacing:-0.207px">00041</span></div><div class="c" style="left:158px;top:168px;width:25px;padding-left:3px"><span style="letter-spacing:-0.534px">ЗК</span></div><div class="c" style="left:184px;top:168px;width:50px;padding-left:3px"><span style="letter-spacing:-0.377px">10.05.24</span></div><div class="c" style="left:235px;top:168px;width:34px;padding-left:3px"><span style="letter-spacing:-0.3px">23:33</span></div><div class="c" style="left:270px;top:168px;width:167px;padding-left:3px"><span style="letter-spacing:-0.134px">ОДО "ЛюксСофтСервис"</span></div><div class="c" style="left:438px;top:168px;width:167px;padding-left:3px"><span style="letter-spacing:-0.282px">ЛюксСофтСервис Столовая</span></div><div class="c" style="left:606px;top:168px;width:166px;padding-left:3px"><span style="letter-spacing:-0.394px">ГП МОГОСТ</span></div><div class="c" style="left:773px;top:168px;width:167px;padding-left:3px"><span style="letter-spacing:-0.394px">Склад ГП МОГОСТ</span></div><div class="c r" style="left:941px;top:168px;width:71px;padding:0 3px 0 4px"><span style="letter-spacing:-0.207px">1</span></div><div class="c r" style="left:1013px;top:168px;width:71px;padding:0 3px 0 4px"><span style="letter-spacing:-0.207px">1</span></div><div class="c r" style="left:1341px;top:168px;width:87px;padding:0 3px 0 4px"><span style="letter-spacing:-0.207px">100</span></div><div class="c r" style="left:1429px;top:168px;width:87px;padding:0 3px 0 4px"><span style="letter-spacing:-0.207px">100</span></div>
</div>
<svg width="1636" height="773" viewBox="0 0 1636 773" style="pointer-events:none"><circle cx="33.5" cy="115.5" r="4.2" fill="none" stroke="#a0a0a0" stroke-width="1"/><path d="M31 115.5H36" stroke="#a0a0a0" stroke-width="1" fill="none"/><circle cx="33.5" cy="189.5" r="4.2" fill="none" stroke="#a0a0a0" stroke-width="1"/><path d="M31 189.5H36" stroke="#a0a0a0" stroke-width="1" fill="none"/><circle cx="33.5" cy="549.5" r="4.2" fill="none" stroke="#a0a0a0" stroke-width="1"/><path d="M31 549.5H36" stroke="#a0a0a0" stroke-width="1" fill="none"/><rect x="35" y="86.6" width="9.8" height="9.4" fill="#f3f8f9"/><path d="M34.6 86V96M45.2 86V96" stroke="#6e645c" stroke-width="1" fill="none"/><path d="M33.9 96.4H46" stroke="#222" stroke-width="1.1" fill="none"/><path d="M34.4 86H45.6" stroke="#555" stroke-width=".9" stroke-dasharray="1 .55" fill="none"/><path d="M36.3 88.8H41" stroke="#111" stroke-width="1.6" fill="none"/><path d="M42.1 88.8H43.2" stroke="#7a5a40" stroke-width="1.2" fill="none"/><path d="M36.3 91.7H41" stroke="#111" stroke-width="1.6" fill="none"/><path d="M42.1 91.7H43.2" stroke="#7a5a40" stroke-width="1.2" fill="none"/><path d="M36.3 94.4H41" stroke="#111" stroke-width="1.6" fill="none"/><path d="M42.1 94.4H43.2" stroke="#7a5a40" stroke-width="1.2" fill="none"/><path style="stroke-width:1;stroke:#222" class="d" d="M1580.2 97.4L1581.4 93L1591.7 82.5L1595.6 86.4L1585.2 96.9Z"/><path style="stroke-width:1" class="b" d="M1589.2 85.2L1592.9 88.9"/><path style="stroke:#222;stroke-width:1.25;stroke-linecap:butt;stroke-linejoin:miter" class="d" d="M1608.3 87.3V82.4H1613.2M1618.8 97.3H1623.7V92.4"/><path style="stroke:#29b0f0;stroke-width:1.25;stroke-linecap:butt;stroke-linejoin:miter" class="b" d="M1618.8 82.4H1623.7V87.3M1608.3 92.4V97.3H1613.2"/>
<circle style="stroke-width:1.1" class="b" cx="29.9" cy="522.2" r="1.5"/><path style="stroke:#222;stroke-width:1.1;stroke-linecap:butt" class="d" d="M34.5 522.5H43.8"/><circle style="stroke-width:1.1" class="b" cx="29.9" cy="527.1" r="1.5"/><path style="stroke:#222;stroke-width:1.1;stroke-linecap:butt" class="d" d="M34.5 527.4H43.8"/><circle style="stroke-width:1.1" class="b" cx="29.9" cy="532" r="1.5"/><path style="stroke:#222;stroke-width:1.1;stroke-linecap:butt" class="d" d="M34.5 532.3H43.8"/><rect x="56.6" y="519.6" width="15" height="14.9" rx="1" fill="#fafafa"/><path style="stroke:#29b0f0;stroke-width:1.2;stroke-linecap:butt" class="b" d="M61.6 520.3V533.8M66.6 520.3V533.8M57.3 524.6H70.9M57.3 529.6H70.9"/><rect x="56.6" y="519.6" width="15" height="14.9" rx="1" fill="none" stroke="#222" stroke-width="1.3"/><path style="stroke:#222;stroke-width:1.1;stroke-linecap:butt" class="d" d="M88.3 521.5H103.7M92.7 529.5H99.4"/><path style="stroke:#29b0f0;stroke-width:1.2;stroke-linecap:butt" class="b" d="M90.7 525.5H101.4M94.3 533.4H97.7"/><path style="stroke:#222;stroke-width:1.1" class="d" d="M125.95 521.90 L126.04 519.66 L129.96 519.66 L130.05 521.90 L131.30 522.63 L133.29 521.59 L135.25 524.97 L133.35 526.18 L133.35 527.62 L135.25 528.83 L133.29 532.21 L131.30 531.17 L130.05 531.90 L129.96 534.14 L126.04 534.14 L125.95 531.90 L124.70 531.17 L122.71 532.21 L120.75 528.83 L122.65 527.62 L122.65 526.18 L120.75 524.97 L122.71 521.59 L124.70 522.63 Z"/><circle style="stroke:#29b0f0;stroke-width:1.3" class="b" cx="128" cy="526.9" r="2.4"/><path style="stroke:#222;stroke-width:1.1;stroke-linecap:butt" class="d" d="M158.4 521.4H167.8"/><text x="154.4" y="522.9" text-anchor="middle" font-family="Liberation Sans,sans-serif" font-size="5.3" font-weight="bold" fill="#29b0f0">1</text><path style="stroke:#222;stroke-width:1.1;stroke-linecap:butt" class="d" d="M158.4 527.5H167.8"/><text x="154.4" y="529" text-anchor="middle" font-family="Liberation Sans,sans-serif" font-size="5.3" font-weight="bold" fill="#29b0f0">2</text><path style="stroke:#222;stroke-width:1.1;stroke-linecap:butt" class="d" d="M158.4 533.4H167.8"/><text x="154.4" y="534.9" text-anchor="middle" font-family="Liberation Sans,sans-serif" font-size="5.3" font-weight="bold" fill="#29b0f0">3</text><path style="stroke:#222;stroke-width:1.1;stroke-linecap:butt" class="d" d="M180.6 520.4H195.5M180.6 524.5H195.5M180.6 528.7H186.4M180.6 532.7H186.4"/><path style="stroke:#29b0f0;stroke-width:1.2;stroke-linecap:butt" class="b" d="M189.4 530.7H195.6M192.5 527.6V533.8"/><path style="stroke:#5a5a5a;stroke-width:1.6" class="d" d="M218.4 522.9H215a2 2 0 0 0-2 2V531.8a2 2 0 0 0 2 2H222.5a2 2 0 0 0 2-2V528.2"/><path style="stroke:#222;stroke-width:1.3;stroke-linecap:butt" class="d" d="M218.6 522.9H216M224.5 528V531"/><path style="stroke:#3bb8f2;stroke-width:1.3;stroke-linecap:butt" class="b" d="M219.3 527.4L226.8 520.1"/><path style="stroke:#86d3f6;stroke-width:1.3;stroke-linecap:butt;stroke-linejoin:miter" class="b" d="M220.6 519.9H227.1V526.1"/><path style="stroke:#222;stroke-width:1.3;stroke-linecap:butt;stroke-linejoin:miter" class="d" d="M246.7 531.4H244.6V522.6H254.4M251.4 519.3L254.7 522.6L251.4 525.6"/><path style="stroke:#29b0f0;stroke-width:1.3;stroke-linecap:butt;stroke-linejoin:miter" class="b" d="M257 522.5H259V531.4H249.6M252.5 528.4L249.4 531.4L252.5 534.5"/></svg>
</body></html>
